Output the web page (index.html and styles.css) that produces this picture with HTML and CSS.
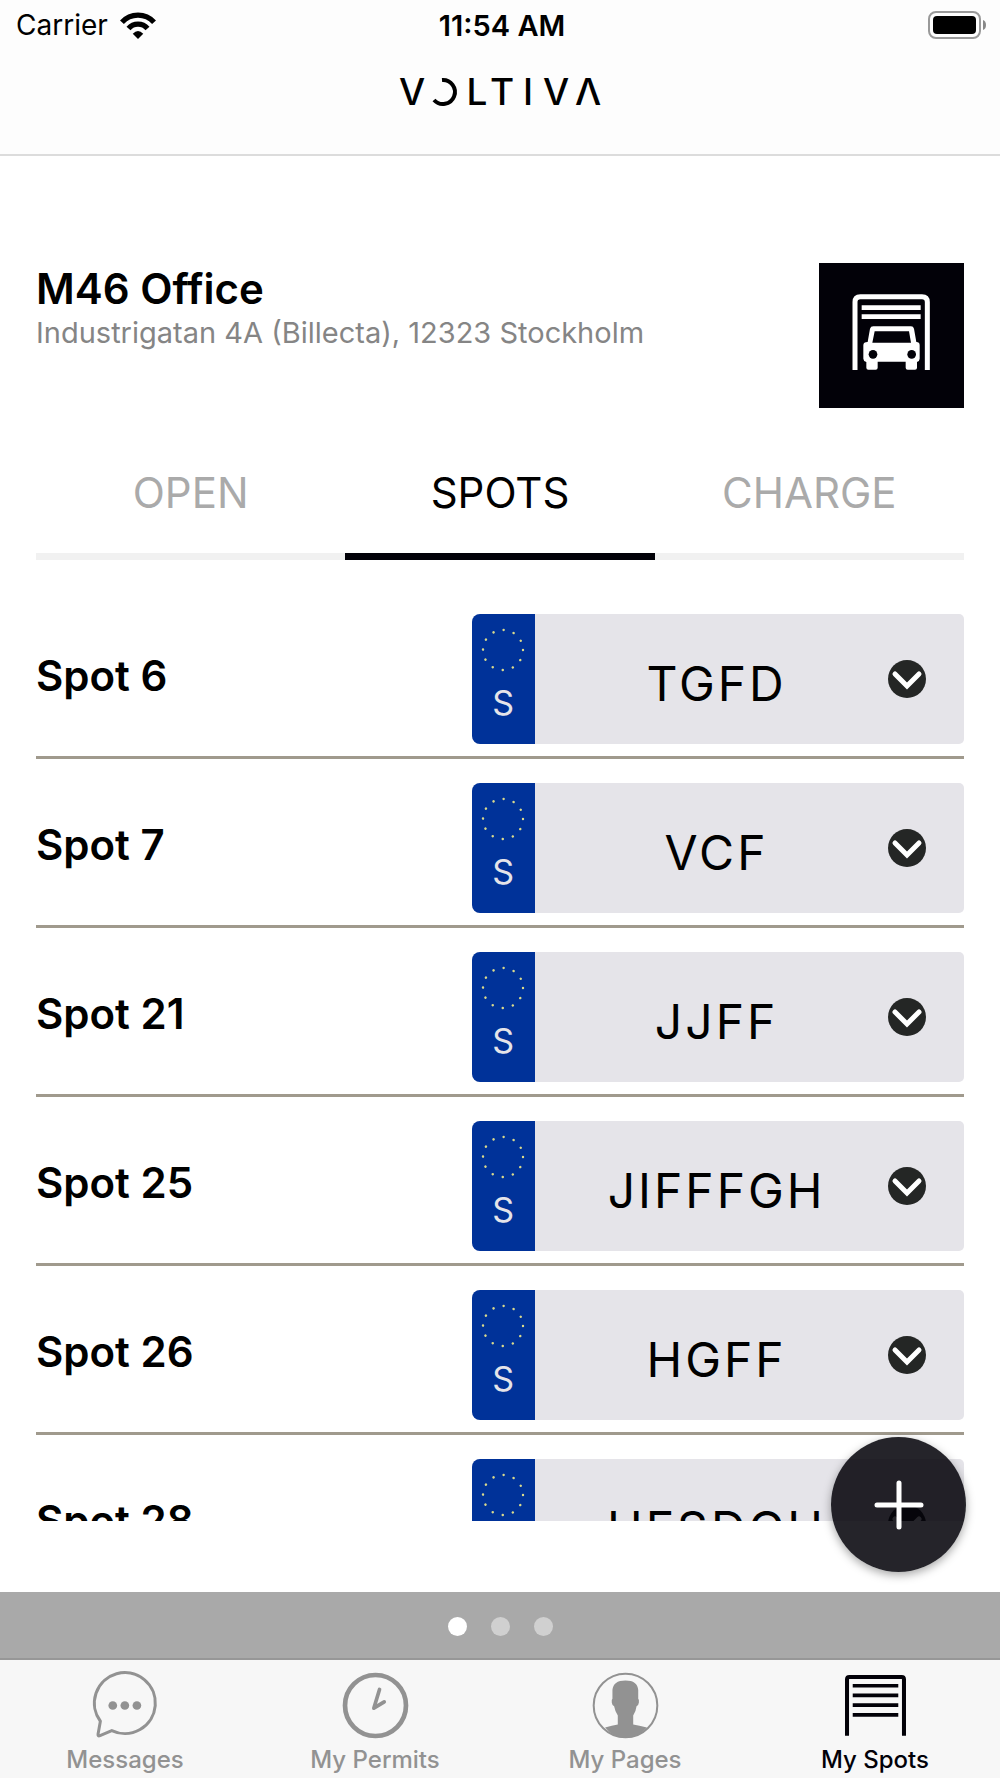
FILE: index.html
```html
<!DOCTYPE html>
<html lang="en">
<head>
    <meta charset="UTF-8">
    <meta name="viewport" content="width=device-width, initial-scale=1.0">
    <title>Voltiva - My Spots</title>
    <link rel="stylesheet" href="styles.css">
</head>
<body>
    <!-- Shared icons -->
    <svg class="icon-defs" aria-hidden="true">
        <symbol id="stars" viewBox="0 0 44 44">
            <circle cx="22" cy="22" r="20" fill="none" stroke="#d9d98c" stroke-width="2.4" stroke-linecap="round" stroke-dasharray="0.1 10.372"/>
        </symbol>
        <symbol id="chevron" viewBox="0 0 38 38">
            <circle cx="19" cy="19" r="19" fill="#242625"/>
            <path d="M7 14 L19 26 L31 14" fill="none" stroke="#fff" stroke-width="5" stroke-linecap="round" stroke-linejoin="miter"/>
        </symbol>
    </svg>

    <header class="header">
        <div class="status-bar">
            <div class="carrier">
                <span>Carrier</span>
                <svg class="wifi" viewBox="0 0 110 82" aria-hidden="true">
                    <path d="M6 31 A66 66 0 0 1 104 31" fill="none" stroke="#000" stroke-width="16"/>
                    <path d="M26 50 A38 38 0 0 1 84 50" fill="none" stroke="#000" stroke-width="16"/>
                    <path d="M39 66 Q55 50 71 66 L55 82 Z"/>
                </svg>
            </div>
            <div class="time">11:54 AM</div>
            <div class="battery">
                <svg viewBox="0 0 60 28" aria-hidden="true">
                    <rect x="1" y="1" width="51" height="26" rx="7" fill="none" stroke="#999" stroke-width="2"/>
                    <rect x="5" y="5" width="43" height="18" rx="4"/>
                    <path d="M55 9 Q58 10 58 14 Q58 18 55 19 Z" fill="#888"/>
                </svg>
            </div>
        </div>
        <svg class="logo" viewBox="0 0 200 50" role="img" aria-label="Voltiva">
            <text class="logo-text" y="38" x="12 77 102 128 156 188">VLTIVΛ</text>
            <path d="M42 13 A12 12 0 1 1 34 33" fill="none" stroke="#000" stroke-width="4"/>
        </svg>
    </header>

    <main class="main">
        <section class="place">
            <div class="place-info">
                <h1>M46 Office</h1>
                <p>Industrigatan 4A (Billecta), 12323 Stockholm</p>
            </div>
            <svg class="garage" viewBox="0 0 435 435" aria-hidden="true">
                <rect width="435" height="435" fill="#020108"/>
                <path d="M108 321 V117 Q108 101 124 101 H309 Q325 101 325 117 V321" fill="none" stroke="#fff" stroke-width="15"/>
                <path d="M128 134 H305 M128 161 H305" stroke="#fff" stroke-width="14"/>
                <path fill="#fff" fill-rule="evenodd" d="M163 190 H276 Q283 190 285 197 L292 237 Q302 237 302 247 V287 Q302 294 294 297 V314 Q294 320 288 320 H266 Q260 320 260 314 V296 H176 V314 Q176 320 170 320 H148 Q142 320 142 314 V297 Q133 294 133 287 V247 Q133 237 146 237 L153 197 Q155 190 163 190 Z M167 205 L160 239 H276 L270 205 Z"/>
                <circle cx="162" cy="274" r="13" fill="#020108"/>
                <circle cx="278" cy="274" r="13" fill="#020108"/>
            </svg>
        </section>

        <nav class="tabs">
            <button class="tab" type="button">OPEN</button>
            <button class="tab active" type="button">SPOTS</button>
            <button class="tab" type="button">CHARGE</button>
        </nav>

        <ul class="spots">
            <li class="spot">
                <span class="spot-name">Spot 6</span>
                <button class="plate" type="button">
                    <span class="country"><svg class="stars"><use href="#stars"/></svg>S</span>
                    <span class="number">TGFD</span>
                    <svg class="chevron"><use href="#chevron"/></svg>
                </button>
            </li>
            <li class="spot">
                <span class="spot-name">Spot 7</span>
                <button class="plate" type="button">
                    <span class="country"><svg class="stars"><use href="#stars"/></svg>S</span>
                    <span class="number">VCF</span>
                    <svg class="chevron"><use href="#chevron"/></svg>
                </button>
            </li>
            <li class="spot">
                <span class="spot-name">Spot 21</span>
                <button class="plate" type="button">
                    <span class="country"><svg class="stars"><use href="#stars"/></svg>S</span>
                    <span class="number">JJFF</span>
                    <svg class="chevron"><use href="#chevron"/></svg>
                </button>
            </li>
            <li class="spot">
                <span class="spot-name">Spot 25</span>
                <button class="plate" type="button">
                    <span class="country"><svg class="stars"><use href="#stars"/></svg>S</span>
                    <span class="number">JIFFFGH</span>
                    <svg class="chevron"><use href="#chevron"/></svg>
                </button>
            </li>
            <li class="spot">
                <span class="spot-name">Spot 26</span>
                <button class="plate" type="button">
                    <span class="country"><svg class="stars"><use href="#stars"/></svg>S</span>
                    <span class="number">HGFF</span>
                    <svg class="chevron"><use href="#chevron"/></svg>
                </button>
            </li>
            <li class="spot">
                <span class="spot-name">Spot 28</span>
                <button class="plate" type="button">
                    <span class="country"><svg class="stars"><use href="#stars"/></svg>S</span>
                    <span class="number">HFSDGH</span>
                    <svg class="chevron"><use href="#chevron"/></svg>
                </button>
            </li>
        </ul>

        <button class="add" type="button" aria-label="Add spot">
            <svg viewBox="0 0 50 50" aria-hidden="true">
                <path d="M25 3 V47 M3 25 H47" stroke="#fff" stroke-width="5" stroke-linecap="round"/>
            </svg>
        </button>
    </main>

    <footer class="footer">
        <div class="pager">
            <span class="dot current"></span>
            <span class="dot"></span>
            <span class="dot"></span>
        </div>
        <nav class="bottom-nav">
            <a class="nav-item" href="#messages">
                <svg viewBox="0 0 200 200" aria-hidden="true">
                    <path d="M25 147 A91 91 0 1 1 59 175 L24 190 Q17 193 18 186 Z" fill="none" stroke="#929292" stroke-width="9" stroke-linejoin="round"/>
                    <circle cx="62" cy="100" r="13" fill="#929292"/>
                    <circle cx="98" cy="100" r="13" fill="#929292"/>
                    <circle cx="134" cy="100" r="13" fill="#929292"/>
                </svg>
                <span>Messages</span>
            </a>
            <a class="nav-item" href="#permits">
                <svg viewBox="0 0 200 200" aria-hidden="true">
                    <circle cx="100" cy="100" r="91" fill="none" stroke="#929292" stroke-width="14"/>
                    <path d="M112 52 L95 108 L126 89" fill="none" stroke="#929292" stroke-width="11" stroke-linecap="round" stroke-linejoin="round"/>
                </svg>
                <span>My Permits</span>
            </a>
            <a class="nav-item" href="#pages">
                <svg viewBox="0 0 200 200" aria-hidden="true">
                    <circle cx="100" cy="100" r="95" fill="none" stroke="#929292" stroke-width="6"/>
                    <path fill="#929292" d="M39 166 Q60 160 77 157 V130 Q69 118 66 102 Q60 100 59 91 Q58 82 61 80 V54 Q63 25 100 25 Q136 25 138 54 V80 Q141 82 140 91 Q139 100 133 102 Q131 118 123 130 V157 Q140 160 164 166 Q138 197 100 197 Q64 197 39 166 Z"/>
                </svg>
                <span>My Pages</span>
            </a>
            <a class="nav-item active" href="#spots">
                <svg viewBox="0 0 200 200" aria-hidden="true">
                    <path d="M15 190 V22 Q15 15 22 15 H178 Q185 15 185 22 V190" fill="none" stroke="#020108" stroke-width="12"/>
                    <path d="M32 41 H168 M32 70 H168 M32 99 H168 M32 128 H168" stroke="#020108" stroke-width="11"/>
                </svg>
                <span>My Spots</span>
            </a>
        </nav>
    </footer>
</body>
</html>
```
FILE: styles.css
```css
* {
    box-sizing: border-box;
}
body {
    margin: 0;
    height: 100vh;
    display: flex;
    flex-direction: column;
    overflow: hidden;
    font-family: Inter, "Liberation Sans", sans-serif;
    background-color: #fff;
    color: #000;
}
button {
    font-family: inherit;
    color: inherit;
    border: none;
    padding: 0;
    background: none;
    cursor: pointer;
}
.icon-defs {
    display: none;
}

/* Header */
.header {
    background-color: #fdfdfd;
    border-bottom: 2px solid #dcdcdc;
    padding-bottom: 37px;
}
.status-bar {
    display: grid;
    grid-template-columns: 1fr auto 1fr;
    align-items: center;
    height: 50px;
    padding: 0 12px 0 16px;
    font-size: 28px;
}
.carrier {
    display: flex;
    align-items: center;
    gap: 12px;
}
.wifi {
    width: 36px;
    height: 27px;
}
.time {
    font-size: 29px;
    font-weight: 600;
}
.battery {
    display: flex;
    justify-content: flex-end;
}
.battery svg {
    width: 60px;
    height: 28px;
}
.logo {
    display: block;
    width: 200px;
    height: 50px;
    margin: 17px auto 0;
    overflow: visible;
}
.logo-text {
    font-size: 37px;
    font-weight: 500;
    text-anchor: middle;
}

/* Place */
.main {
    flex: 1;
    min-height: 0;
    display: flex;
    flex-direction: column;
    position: relative;
    padding: 107px 36px 71px;
}
.place {
    display: flex;
    justify-content: space-between;
    align-items: flex-start;
}
.place-info h1 {
    margin: 0;
    font-size: 42px;
    line-height: 52px;
    font-weight: 600;
}
.place-info p {
    margin: 0;
    font-size: 29px;
    line-height: 36px;
    color: #858585;
}
.garage {
    width: 145px;
    height: 145px;
}

/* Tabs */
.tabs {
    display: grid;
    grid-template-columns: repeat(3, 1fr);
    margin-top: 60px;
}
.tab {
    padding-bottom: 35px;
    border-bottom: 7px solid #f1f1f1;
    font-size: 42px;
    line-height: 50px;
    color: #aaa;
}
.tab.active {
    color: #000;
    border-bottom-color: #020108;
}

/* Spots */
.spots {
    flex: 1;
    min-height: 0;
    overflow: hidden;
    list-style: none;
    margin: 30px 0 0;
    padding: 0;
}
.spot {
    display: grid;
    grid-template-columns: 47% 53%;
    align-items: center;
    padding: 24px 0 12px;
    border-bottom: 3px solid #a09a8d;
}
.spot-name {
    padding-bottom: 8px;
    font-size: 42px;
    font-weight: 600;
}
.plate {
    display: flex;
    align-items: center;
    height: 130px;
    padding-right: 38px;
    border-radius: 8px 5px 5px 8px;
    overflow: hidden;
    background-color: #e5e4e9;
}
.country {
    display: flex;
    flex-direction: column;
    align-items: center;
    align-self: stretch;
    gap: 10px;
    width: 63px;
    padding: 14px 1px 0 0;
    background-color: #003299;
    color: #e5e4e9;
    font-size: 34px;
}
.stars {
    width: 44px;
    height: 44px;
}
.number {
    flex: 1;
    padding: 8px 0 0 10px;
    font-size: 48px;
    letter-spacing: 3px;
}
.chevron {
    width: 38px;
    height: 38px;
}
.add {
    position: absolute;
    right: 34px;
    bottom: 20px;
    width: 135px;
    height: 135px;
    display: flex;
    align-items: center;
    justify-content: center;
    border-radius: 50%;
    background-color: rgba(1, 0, 7, 0.86);
    box-shadow: 0 3px 10px rgba(0, 0, 0, 0.35);
}
.add svg {
    width: 50px;
    height: 50px;
}

/* Footer */
.pager {
    display: flex;
    align-items: center;
    justify-content: center;
    gap: 24px;
    height: 68px;
    padding-top: 3px;
    background-color: #a9a9a9;
    border-bottom: 2px solid #979797;
}
.dot {
    width: 19px;
    height: 19px;
    border-radius: 50%;
    background-color: #d0d0d0;
}
.dot.current {
    background-color: #fff;
}
.bottom-nav {
    display: grid;
    grid-template-columns: repeat(4, 1fr);
    height: 118px;
    padding-top: 12px;
    background-color: #f7f7f7;
}
.nav-item {
    display: flex;
    flex-direction: column;
    align-items: center;
    gap: 6px;
    font-size: 24px;
    line-height: 30px;
    font-weight: 500;
    color: #929292;
    text-decoration: none;
}
.nav-item svg {
    width: 67px;
    height: 67px;
    overflow: visible;
}
.nav-item.active {
    color: #020108;
}
```
